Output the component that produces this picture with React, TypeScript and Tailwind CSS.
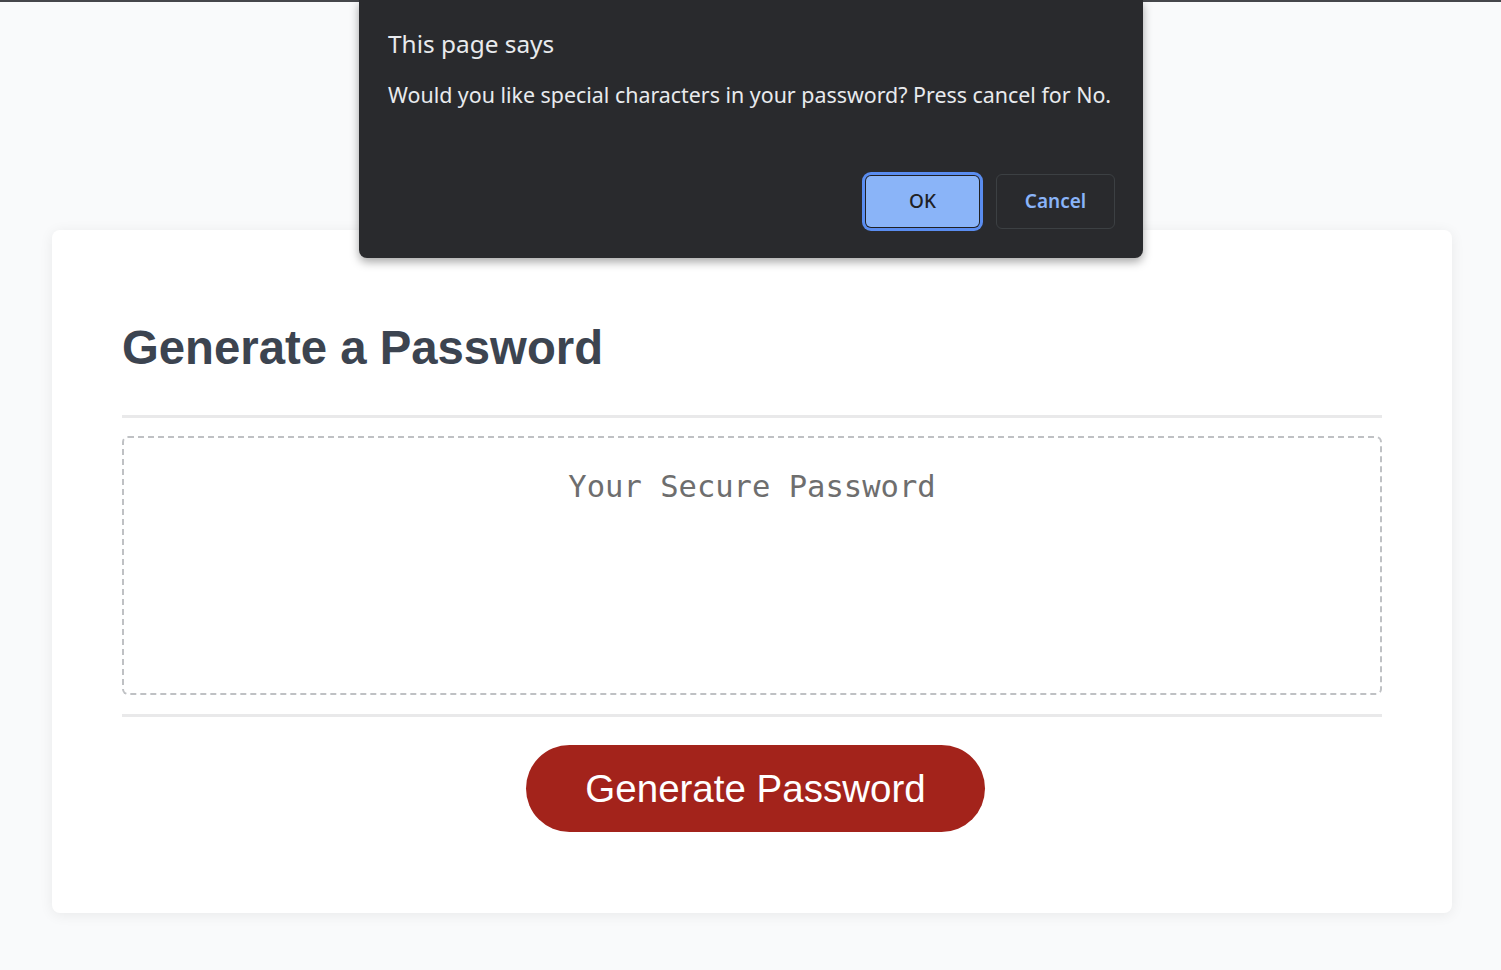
export default function App() {
  return (
    <div className="relative min-h-[970px] w-full bg-[#f9fafb]">
      {/* browser frame edge */}
      <div className="h-[2px] w-full bg-[#45474b]" />

      <div className="ml-[52px] mt-[228px] w-[1400px] rounded-lg bg-white px-[70px] pb-[81px] pt-[94px] shadow-[0_2px_14px_rgba(0,0,0,0.07)]">
        <h2 className="font-['Liberation_Sans',Arial,sans-serif] text-[47.3px] font-bold leading-none text-[#3c4450]">
          Generate a Password
        </h2>
        <div className="mt-[44px] h-[3px] w-full bg-[#e9e9ea]" />
        <div className="mt-[18px] h-[259px] rounded-[6px] border-2 border-dashed border-[#bfc1c4] pt-[31px] text-center">
          <span className="font-['DejaVu_Sans_Mono',monospace] text-[30.5px] leading-[36px] text-[#6e6e6e]">
            Your Secure Password
          </span>
        </div>
        <div className="mt-[19px] h-[3px] w-full bg-[#e9e9ea]" />
        <div className="mt-[28px] flex justify-center">
          <button className="ml-[7px] h-[87px] w-[459px] rounded-full bg-[#a3231b] font-['Liberation_Sans',Arial,sans-serif] text-[38.5px] text-white">
            Generate Password
          </button>
        </div>
      </div>

      {/* native confirm dialog */}
      <div className="absolute left-[359px] top-0 flex h-[258px] w-[784px] flex-col rounded-b-lg bg-[#292a2d] pb-[29px] pl-[29px] pr-[28px] pt-[32px] font-['Noto_Sans',sans-serif] text-[#e8eaed] shadow-[0_4px_10px_rgba(0,0,0,0.35)]">
        <div className="text-[24.4px] leading-none">This page says</div>
        <div className="mt-[28px] whitespace-nowrap text-[21.4px] leading-none">
          Would you like special characters in your password? Press cancel for No.
        </div>
        <div className="mt-auto flex items-center justify-end gap-[17px]">
          <button className="h-[51px] w-[113px] rounded-[5px] bg-[#8ab4f8] text-[19px] font-medium text-[#202124] shadow-[0_0_0_1px_#1f2023,0_0_0_4px_#5a8df0]">
            OK
          </button>
          <button className="h-[55px] w-[119px] rounded-[6px] border border-[#3c4043] text-[19px] font-semibold text-[#8ab4f8]">
            Cancel
          </button>
        </div>
      </div>
    </div>
  );
}
